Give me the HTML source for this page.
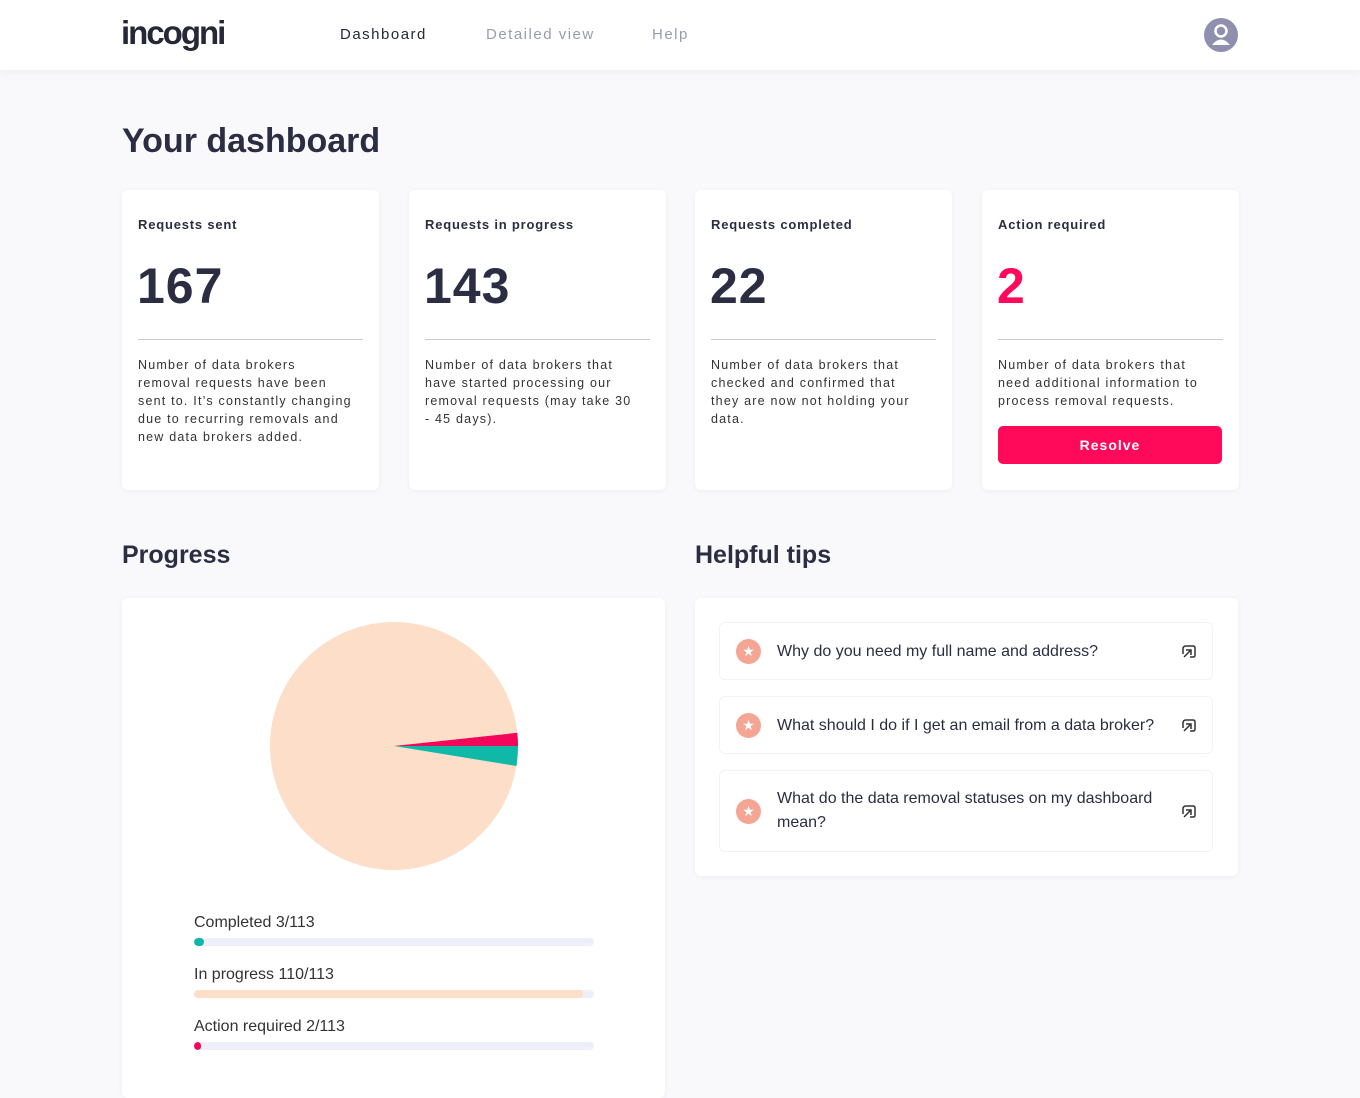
<!DOCTYPE html>
<html><head><meta charset="utf-8"><style>
*{box-sizing:border-box;margin:0;padding:0}
body{width:1360px;height:1077px;overflow:hidden;background:#f9f9fc;font-family:"Liberation Sans",sans-serif;color:#2b2d42;position:relative}
.hdr{position:absolute;left:0;top:0;width:1360px;height:70px;background:#fff;box-shadow:0 2px 8px rgba(0,0,0,.05)}
.logo{position:absolute;left:121px;top:14px;font-size:33px;font-weight:bold;letter-spacing:-2px;color:#262838}
.nav{position:absolute;top:26px;font-size:15px;letter-spacing:1.5px}
h1{position:absolute;left:122px;top:122px;font-size:34px;font-weight:bold}
h2{position:absolute;top:541px;font-size:25px;font-weight:bold}
.card{position:absolute;top:190px;width:257px;height:300px;background:#fff;border-radius:6px;box-shadow:0 1px 6px rgba(0,0,0,.05)}
.card .t{position:absolute;left:16px;top:27px;font-size:13px;font-weight:bold;letter-spacing:.8px}
.card .n{position:absolute;left:15px;top:67px;font-size:50px;font-weight:bold;letter-spacing:1px}
.card .l{position:absolute;left:16px;right:16px;top:149px;border-top:1px solid #c9cad2}
.card .d{position:absolute;left:16px;top:166px;font-size:12.5px;line-height:18px;letter-spacing:1.2px;color:#333;white-space:nowrap}
.btn{position:absolute;left:16px;top:236px;width:224px;height:38px;background:#ff0a5a;color:#fff;border-radius:5px;font-weight:bold;font-size:14px;letter-spacing:1px;text-align:center;line-height:38px}
.panel{position:absolute;background:#fff;border-radius:6px;box-shadow:0 1px 6px rgba(0,0,0,.05)}
.tip{position:absolute;left:24px;width:494px;background:#fff;border:1px solid #f3f3f6;border-radius:6px;font-size:16px;color:#2b2d42}
.tip .s{position:absolute;left:16px;width:25px;height:25px;border-radius:50%;background:#f4a593;color:#fff;font-size:14px;text-align:center;line-height:25px}
.tip .x{position:absolute;right:16px;width:14px;height:14px}
.lbl{position:absolute;left:194px;font-size:16px;color:#333}
.bar{position:absolute;left:194px;width:400px;height:8px;border-radius:4px;background:#eeeff8;overflow:hidden}
.bar div{height:8px;border-radius:4px}
</style></head><body>
<div class="hdr">
<div class="logo">incogni</div>
<div class="nav" style="left:340px;color:#262838">Dashboard</div>
<div class="nav" style="left:486px;color:#9a9cae">Detailed view</div>
<div class="nav" style="left:652px;color:#9a9cae">Help</div>
<svg style="position:absolute;left:1204px;top:18px" width="34" height="34" viewBox="0 0 34 34"><circle cx="17" cy="17" r="17" fill="#8e90ad"/><circle cx="17" cy="13" r="5.5" fill="none" stroke="#fff" stroke-width="2.5"/><path d="M8 27 Q17 16 26 27" fill="#fff"/></svg>
</div>
<h1>Your dashboard</h1>
<div class="card" style="left:122px"><div class="t">Requests sent</div><div class="n">167</div><div class="l"></div><div class="d">Number of data brokers<br>removal requests have been<br>sent to. It’s constantly changing<br>due to recurring removals and<br>new data brokers added.</div></div>
<div class="card" style="left:409px"><div class="t">Requests in progress</div><div class="n">143</div><div class="l"></div><div class="d">Number of data brokers that<br>have started processing our<br>removal requests (may take 30<br>- 45 days).</div></div>
<div class="card" style="left:695px"><div class="t">Requests completed</div><div class="n">22</div><div class="l"></div><div class="d">Number of data brokers that<br>checked and confirmed that<br>they are now not holding your<br>data.</div></div>
<div class="card" style="left:982px"><div class="t">Action required</div><div class="n" style="color:#ff0a5a">2</div><div class="l"></div><div class="d">Number of data brokers that<br>need additional information to<br>process removal requests.</div><div class="btn">Resolve</div></div>
<h2 style="left:122px">Progress</h2>
<h2 style="left:695px">Helpful tips</h2>
<div class="panel" style="left:122px;top:598px;width:543px;height:500px"></div>
<svg style="position:absolute;left:0;top:0" width="1360" height="1077"><circle cx="394" cy="746" r="124" fill="#fddec8"/><path d="M394 746 L517.3 732.8 A124 124 0 0 1 518 746 Z" fill="#f2075a"/><path d="M394 746 L518 746 A124 124 0 0 1 516.4 766 Z" fill="#10b8a8"/></svg>
<div class="lbl" style="top:914px">Completed 3/113</div><div class="bar" style="top:938px"><div style="width:10px;background:#10b8a8"></div></div>
<div class="lbl" style="top:966px">In progress 110/113</div><div class="bar" style="top:990px"><div style="width:389px;background:#fddec8"></div></div>
<div class="lbl" style="top:1018px">Action required 2/113</div><div class="bar" style="top:1042px"><div style="width:7px;background:#f2075a"></div></div>
<div class="panel" style="left:695px;top:598px;width:543px;height:278px">
<div class="tip" style="top:24px;height:58px"><div class="s" style="top:16px">★</div><div style="position:absolute;left:57px;top:20px">Why do you need my full name and address?</div><svg class="x" style="top:22px" viewBox="0 0 14 14"><path d="M4 1H11Q13 1 13 3V10Q13 12 11 12H8M1 9V4Q1 1 4 1M4 5H9V10M9 5L2 12" fill="none" stroke="#333" stroke-width="1.5"/></svg></div>
<div class="tip" style="top:98px;height:58px"><div class="s" style="top:16px">★</div><div style="position:absolute;left:57px;top:20px">What should I do if I get an email from a data broker?</div><svg class="x" style="top:22px" viewBox="0 0 14 14"><path d="M4 1H11Q13 1 13 3V10Q13 12 11 12H8M1 9V4Q1 1 4 1M4 5H9V10M9 5L2 12" fill="none" stroke="#333" stroke-width="1.5"/></svg></div>
<div class="tip" style="top:172px;height:82px"><div class="s" style="top:28px">★</div><div style="position:absolute;left:57px;top:16px;line-height:24px;width:380px">What do the data removal statuses on my dashboard mean?</div><svg class="x" style="top:34px" viewBox="0 0 14 14"><path d="M4 1H11Q13 1 13 3V10Q13 12 11 12H8M1 9V4Q1 1 4 1M4 5H9V10M9 5L2 12" fill="none" stroke="#333" stroke-width="1.5"/></svg></div>
</div>
</body></html>
